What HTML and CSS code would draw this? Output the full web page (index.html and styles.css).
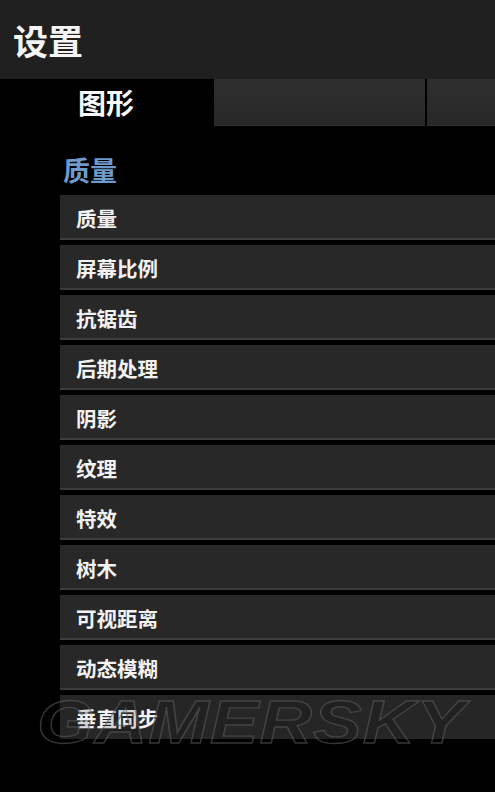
FILE: index.html
```html
<!DOCTYPE html>
<html lang="zh-CN">
<head>
<meta charset="utf-8">
<title>设置</title>
<link rel="stylesheet" href="styles.css">
</head>
<body>
<div class="page">
  <header class="topbar"><h1 class="title">设置</h1></header>
  <nav class="tabs">
    <div class="tab tab-active">图形</div>
    <div class="tab tab-blank"></div>
    <div class="tab tab-blank tab-last"></div>
  </nav>
  <h2 class="section">质量</h2>
  <ul class="list">
    <li class="row">质量</li>
    <li class="row">屏幕比例</li>
    <li class="row">抗锯齿</li>
    <li class="row">后期处理</li>
    <li class="row">阴影</li>
    <li class="row">纹理</li>
    <li class="row">特效</li>
    <li class="row">树木</li>
    <li class="row">可视距离</li>
    <li class="row">动态模糊</li>
    <li class="row row-last">垂直同步</li>
  </ul>
  <div class="watermark">GAMERSKY</div>
</div>
</body>
</html>
```

FILE: styles.css
```css
html, body {
  margin: 0;
  padding: 0;
  background: #000;
}
body {
  width: 495px;
  height: 792px;
  overflow: hidden;
  font-family: "Noto Sans CJK SC", "Noto Sans", sans-serif;
  color: #fff;
}
.page {
  position: relative;
  width: 495px;
  height: 792px;
  background: #000;
}
.topbar {
  height: 79px;
  background: #202020;
  display: flex;
  align-items: center;
  padding-left: 13px;
  box-sizing: border-box;
}
.title {
  margin: 0;
  font-size: 35px;
  font-weight: 700;
  line-height: 36px;
  color: #f4f4f4;
}
.tabs {
  display: flex;
  height: 47px;
  gap: 2px;
}
.tab {
  height: 47px;
  display: flex;
  align-items: center;
}
.tab-active {
  width: 212px;
  flex: none;
  padding-left: 78px;
  box-sizing: border-box;
  font-size: 28px;
  font-weight: 700;
  line-height: 28px;
  color: #fafafa;
  padding-bottom: 2px;
}
.tab-blank {
  width: 211px;
  flex: none;
  background: linear-gradient(#2f2f2f, #272727);
  border-bottom: 1px solid #303030;
  box-sizing: border-box;
}
.tab-last {
  flex: 1;
  width: auto;
}
.section {
  margin: 0;
  height: 69px;
  box-sizing: border-box;
  padding: 30px 0 0 63px;
  font-size: 27px;
  line-height: 28px;
  font-weight: 700;
  color: #6f9acb;
}
.list {
  list-style: none;
  margin: 0;
  padding: 0 0 0 60px;
  display: flex;
  flex-direction: column;
  gap: 5px;
}
.row {
  height: 45px;
  box-sizing: border-box;
  background: #282828;
  border-bottom: 2px solid #3d3d3d;
  display: flex;
  align-items: center;
  padding-left: 16px;
  padding-top: 3px;
  font-size: 20.5px;
  font-weight: 700;
  line-height: 21px;
  color: #f2f2f2;
}
.row-last {
  height: 44px;
  border-bottom: none;
  background: #262626;
}
.watermark {
  position: absolute;
  left: 37px;
  top: 687px;
  font-family: "Liberation Sans", Arial, sans-serif;
  font-weight: 700;
  font-style: italic;
  font-size: 61px;
  line-height: 70px;
  letter-spacing: 1px;
  transform: scaleX(1.19);
  transform-origin: left top;
  color: rgba(0, 0, 0, 0.12);
  -webkit-text-stroke: 1.3px rgba(90, 90, 90, 0.6);
  pointer-events: none;
}
```
